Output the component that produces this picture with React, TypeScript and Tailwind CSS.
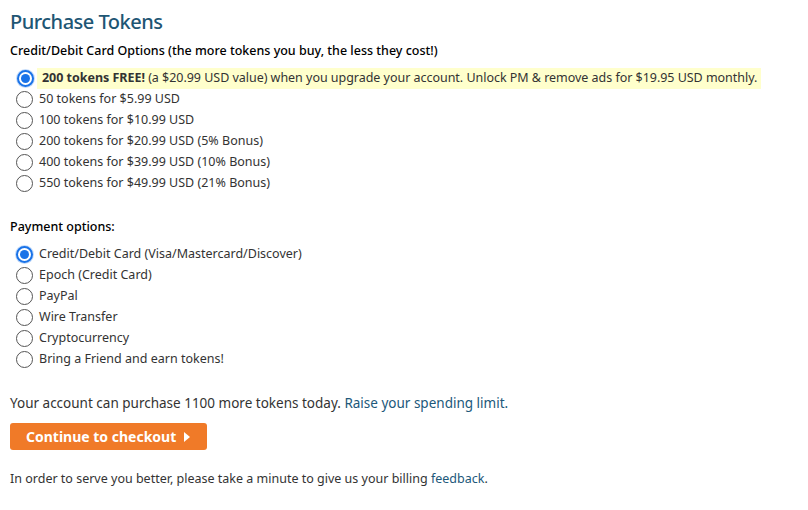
const tokenOptions = [
  "50 tokens for $5.99 USD",
  "100 tokens for $10.99 USD",
  "200 tokens for $20.99 USD (5% Bonus)",
  "400 tokens for $39.99 USD (10% Bonus)",
  "550 tokens for $49.99 USD (21% Bonus)",
];

const paymentOptions = [
  "Credit/Debit Card (Visa/Mastercard/Discover)",
  "Epoch (Credit Card)",
  "PayPal",
  "Wire Transfer",
  "Cryptocurrency",
  "Bring a Friend and earn tokens!",
];

function Radio({ checked }: { checked?: boolean }) {
  if (checked) {
    return (
      <span className="w-[17px] h-[17px] rounded-full border-2 border-[#1a73e8] bg-white flex items-center justify-center shrink-0 shadow-[0_0_0_1px_#c5dcfa]">
        <span className="w-[9px] h-[9px] rounded-full bg-[#1a73e8]" />
      </span>
    );
  }
  return <span className="w-[17px] h-[17px] rounded-full border border-[#555] bg-white shrink-0" />;
}

export default function App() {
  return (
    <div className="min-h-[510px] bg-white px-[10px] pt-[9px] text-[12.5px] text-[#333] font-['Noto_Sans',sans-serif]">
      <h1 className="text-[20px] leading-[26px] tracking-[-0.5px] font-medium text-[#1e5674]">Purchase Tokens</h1>

      <p className="mt-[7px] leading-[18px] font-medium text-black">
        Credit/Debit Card Options (the more tokens you buy, the less they cost!)
      </p>

      {/* Token packages */}
      <div className="mt-[8px] flex flex-col">
        <label className="h-[21px] flex items-center">
          <span className="w-[27px] flex justify-center pl-[3px]">
            <Radio checked />
          </span>
          <span className="h-[21px] flex items-center bg-[#ffffcc] pl-[5px] pr-[4px] tracking-[-0.03px]">
            <b className="font-bold">200 tokens FREE!</b>
            &nbsp;(a $20.99 USD value) when you upgrade your account. Unlock PM &amp; remove ads for $19.95 USD monthly.
          </span>
        </label>
        {tokenOptions.map((t) => (
          <label key={t} className="h-[21px] flex items-center">
            <span className="w-[29px] flex justify-center">
              <Radio />
            </span>
            {t}
          </label>
        ))}
      </div>

      <p className="mt-[24px] leading-[18px] font-medium text-black">Payment options:</p>

      <div className="mt-[8px] flex flex-col">
        {paymentOptions.map((p, i) => (
          <label key={p} className="h-[21px] flex items-center">
            <span className="w-[29px] flex justify-center">
              <Radio checked={i === 0} />
            </span>
            {p}
          </label>
        ))}
      </div>

      <p className="mt-[24px] leading-[18px] text-[13.5px]">
        Your account can purchase 1100 more tokens today.{" "}
        <a className="text-[#21587a]">Raise your spending limit.</a>
      </p>

      <button className="mt-[11px] h-[27px] w-[197px] rounded-[3px] bg-[#f07a28] text-white text-[14px] font-bold flex items-center pl-[16px] gap-[8px]">
        Continue to checkout
        <span className="w-0 h-0 border-y-[5px] border-y-transparent border-l-[6px] border-l-white" />
      </button>

      <p className="mt-[20px] leading-[18px]">
        In order to serve you better, please take a minute to give us your billing{" "}
        <a className="text-[#21587a]">feedback</a>.
      </p>
    </div>
  );
}
